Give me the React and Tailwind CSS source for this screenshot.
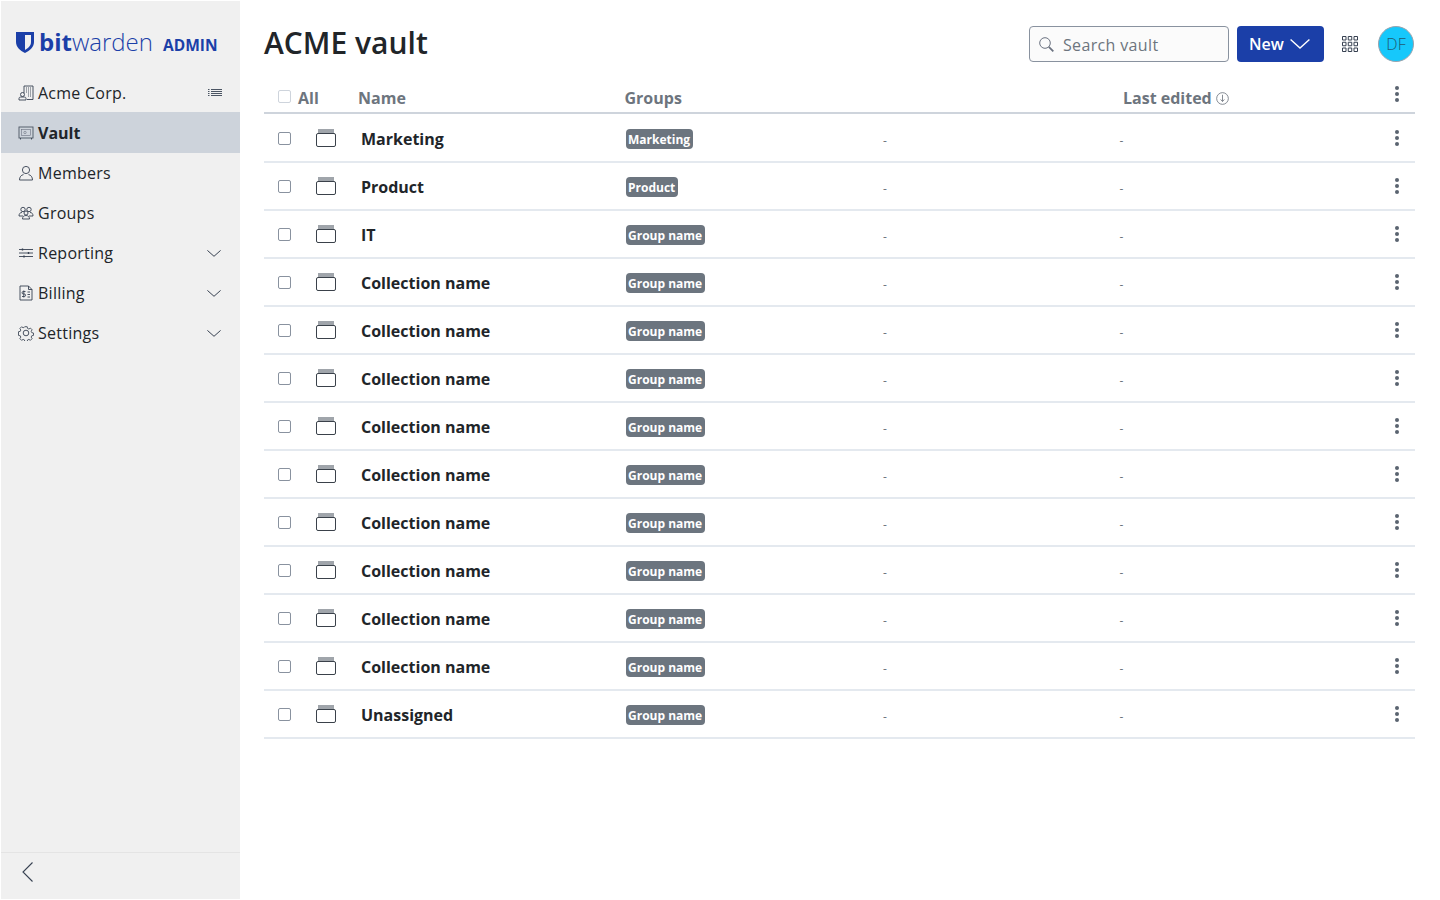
const rows = [
  ["Marketing", "Marketing"],
  ["Product", "Product"],
  ["IT", "Group name"],
  ["Collection name", "Group name"],
  ["Collection name", "Group name"],
  ["Collection name", "Group name"],
  ["Collection name", "Group name"],
  ["Collection name", "Group name"],
  ["Collection name", "Group name"],
  ["Collection name", "Group name"],
  ["Collection name", "Group name"],
  ["Collection name", "Group name"],
  ["Unassigned", "Group name"],
];

function Icon({ children }) {
  return (
    <svg viewBox="0 0 16 16" fill="none" stroke="#374151" strokeWidth="0.9" className="w-[16px] h-[16px] shrink-0">
      {children}
    </svg>
  );
}

const BuildingIcon = () => (
  <Icon>
    <path d="M6 8V1h9v13.500H9" />
    <path d="M8 3h1M10 3h1M12 3h1M8 5h1M10 5h1M12 5h1M8 7h1M10 7h1M12 7h1M10 9h1M12 9h1M10 11h1M12 11h1" />
    <circle cx="4.500" cy="9.500" r="2" />
    <path d="M1 15v-1.500c0-1 .8-1.500 1.800-1.500h3.400c1 0 1.800.5 1.800 1.500V15z" />
  </Icon>
);

const VaultIcon = () => (
  <Icon>
    <rect x="1" y="2" width="14" height="11" stroke="#4b5563" />
    <rect x="3.500" y="4.500" width="9" height="6" stroke="#6b7280" strokeWidth="0.6" />
    <circle cx="7" cy="7.500" r="1.200" stroke="#6b7280" strokeWidth="0.6" />
    <path d="M2.500 13v1.500M13.500 13v1.500" />
  </Icon>
);

const MembersIcon = () => (
  <Icon>
    <circle cx="8" cy="5" r="3.600" />
    <path d="M1.500 15c0-3 1.600-5 4-5.400M14.500 15c0-3-1.600-5-4-5.400M1.500 15h13" />
  </Icon>
);

const GroupsIcon = () => (
  <Icon>
    <circle cx="5" cy="4.500" r="2.200" />
    <circle cx="11" cy="4.500" r="2.200" />
    <circle cx="8" cy="8" r="2" />
    <path d="M1 11c0-2.200 1-3.500 3-3.500M15 11c0-2.200-1-3.500-3-3.500M1 11h4M15 11h-4M4.500 14c0-2.200 1.300-3.500 3.500-3.500s3.500 1.300 3.500 3.500z" />
  </Icon>
);

const ReportingIcon = () => (
  <Icon>
    <path d="M1 4.500h14M1 8h14M1 11.500h14" />
    <path d="M4.500 3.500v2M10.500 7v2M6 10.500v2" strokeWidth="1.400" />
  </Icon>
);

const BillingIcon = () => (
  <Icon>
    <path d="M2 1h8.500L14 4.500V15H2z" />
    <path d="M10.500 1v3.500H14M7.500 6.500H5.300a1.100 1.100 0 0 0 0 2.500h1a1.200 1.200 0 0 1 0 2.500H4M5.800 5.500v7M9.500 7h2.500M9.500 9.500h2.500M9.500 12h2.500" />
  </Icon>
);

const SettingsIcon = () => (
  <Icon>
    <path d="M6.700 1.200h2.600l.4 1.900 1.400.6 1.700-1 1.800 1.800-1 1.700.6 1.400 1.900.4v2.600l-1.900.4-.6 1.400 1 1.700-1.800 1.800-1.700-1-1.400.6-.4 1.900H6.700l-.4-1.900-1.400-.6-1.700 1-1.800-1.800 1-1.700-.6-1.400-1.900-.4V6.600l1.900-.4.6-1.400-1-1.700 1.800-1.800 1.700 1 1.400-.6z" transform="translate(.6 .6) scale(.925)" />
    <circle cx="8" cy="8" r="2.800" />
  </Icon>
);

function Chevron({ className, color = "#374151" }) {
  return (
    <svg viewBox="0 0 14 7" fill="none" stroke={color} strokeWidth="1" className={className}>
      <path d="M.4.4 7 6.300 13.600.4" />
    </svg>
  );
}

function NavItem({ icon, label, bold, chevron, list }) {
  return (
    <div className={`flex items-center pl-[17px] pr-[18px] ${bold ? "h-[41px] -mt-px bg-[#cdd3db] font-bold" : "h-[40px] font-medium tracking-[0.25px]"}`}>
      {icon}
      <span className="ml-[4px] text-[16px] text-[#212529]">{label}</span>
      {chevron && <Chevron className="ml-auto mr-px w-[14px] h-[7px]" />}
      {list && (
        <svg viewBox="0 0 14 8" className="ml-auto w-[14px] h-[8px]" stroke="#4b5563" strokeWidth="1">
          <path d="M3 .5h11M3 2.500h11M3 4.500h11M3 6.500h11M0 .5h1.500M0 2.500h1.500M0 4.500h1.500M0 6.500h1.500" />
        </svg>
      )}
    </div>
  );
}

function Dots() {
  return (
    <svg viewBox="0 0 4 16" className="w-[4px] h-[16px]" fill="#5a6470">
      <circle cx="2" cy="2" r="2" />
      <circle cx="2" cy="8" r="2" />
      <circle cx="2" cy="14" r="2" />
    </svg>
  );
}

function CollectionIcon() {
  return (
    <svg viewBox="0 0 20 18" className="w-[20px] h-[18px]" fill="none">
      <rect x="2" y="0" width="16" height="4" fill="#a0a5ab" />
      <rect x="0.500" y="4.500" width="19" height="13" rx="1.500" fill="#fff" stroke="#3a414a" />
    </svg>
  );
}

function Row({ name, group, first }) {
  return (
    <div className={`flex items-center border-b-2 border-[#e4e9ef] ${first ? "h-[49px] pt-px" : "h-[48px]"}`}>
      <div className="w-[13px] h-[13px] ml-[14px] bg-white border border-[#89929f] rounded-[2px] shrink-0" />
      <div className="ml-[25px] w-[20px] shrink-0 flex">
        <CollectionIcon />
      </div>
      <div className="ml-[25px] w-[265px] shrink-0 mt-[2px] text-[16px] font-bold text-[#212529]">{name}</div>
      <div className="w-[257px] shrink-0 flex mt-[2px]">
        <span className="h-[20px] leading-[22px] pl-[2px] pr-[3px] rounded-[4px] bg-[#6c757f] text-white text-[12px] font-bold">
          {group}
        </span>
      </div>
      <div className="w-[236.500px] shrink-0 text-[12px] text-[#6d757e] mt-[6px]">-</div>
      <div className="text-[12px] text-[#6d757e] mt-[6px]">-</div>
      <div className="ml-auto mr-[16px] flex">
        <Dots />
      </div>
    </div>
  );
}

export default function App() {
  return (
    <div className="h-[900px] flex bg-white overflow-hidden font-['Open_Sans',sans-serif]">
      <aside className="w-[239px] ml-px mt-px mb-px bg-[#f0f0f0] flex flex-col shrink-0">
        <div className="h-[72px] pl-[15px] pt-[21px] flex items-start text-[#1b3fa8]">
          <svg viewBox="0 0 18 21" className="w-[18px] h-[21px] mt-[10px] shrink-0" fill="#1b3fa8">
            <path d="M0 0h18v10c0 5-4 8.500-9 11-5-2.500-9-6-9-11zM9 3v15c3-1.700 6-4 6-8V3z" />
          </svg>
          <span className="ml-[5px] text-[24px] leading-[40px] whitespace-nowrap">
            <span className="font-bold">bit</span>
            <span className="font-light">warden</span>
          </span>
          <span className="ml-[10px] mt-[12px] text-[15.500px] leading-[22px] font-bold">ADMIN</span>
        </div>
        <nav>
          <NavItem icon={<BuildingIcon />} label="Acme Corp." list />
          <NavItem icon={<VaultIcon />} label="Vault" bold />
          <NavItem icon={<MembersIcon />} label="Members" />
          <NavItem icon={<GroupsIcon />} label="Groups" />
          <NavItem icon={<ReportingIcon />} label="Reporting" chevron />
          <NavItem icon={<BillingIcon />} label="Billing" chevron />
          <NavItem icon={<SettingsIcon />} label="Settings" chevron />
        </nav>
        <div className="mt-auto h-[47px] border-t border-[#e4e4e4] flex items-start pt-[9px] pl-[21px]">
          <svg viewBox="0 0 11 20" fill="none" stroke="#374151" strokeWidth="1.100" className="w-[11px] h-[20px]">
            <path d="M10.500.5 1 10l9.500 9.500" />
          </svg>
        </div>
      </aside>

      <main className="flex-1 pl-[24px] pr-[25px]">
        <header className="h-[84px] flex items-start">
          <h1 className="mt-[22px] text-[30px] leading-[42px] font-semibold text-[#212529]">ACME vault</h1>
          <div className="ml-auto mt-[26px] flex items-center">
            <div className="w-[200px] h-[36px] bg-[#fbfbfb] border border-[#89929f] rounded-[4px] flex items-center pl-[9px]">
              <svg viewBox="0 0 15 15" fill="none" stroke="#6b7280" strokeWidth="1" className="w-[15px] h-[15px] shrink-0">
                <circle cx="6" cy="6" r="5.300" />
                <path d="m9.800 9.800 4.500 4.500" strokeWidth="1.800" />
              </svg>
              <span className="ml-[9px] mt-px text-[16px] tracking-[0.35px] text-[#6d757e]">Search vault</span>
            </div>
            <button className="ml-[8px] w-[87px] h-[36px] bg-[#1b3fa8] rounded-[4px] flex items-center pl-[12px] text-white text-[16px] font-semibold">
              New
              <Chevron className="ml-[6px] w-[20px] h-[10px]" color="#ffffff" />
            </button>
            <svg viewBox="0 0 16 16" className="ml-[18px] w-[16px] h-[16px]" fill="none" stroke="#374151">
              <path d="M.5.5h3.500v3.500H.5zM6.250.5h3.500v3.500h-3.500zM12 .5h3.500v3.500H12zM.5 6.250h3.500v3.500H.5zM6.250 6.250h3.500v3.500h-3.500zM12 6.250h3.500v3.500H12zM.5 12h3.500v3.500H.5zM6.250 12h3.500v3.500h-3.500zM12 12h3.500v3.500H12z" />
            </svg>
            <div className="ml-[20px] mr-px w-[36px] h-[36px] rounded-full bg-[#16c8fb] border border-[#9aa3ad] flex items-center justify-center text-[16px] font-light text-[#1f5a70]">
              DF
            </div>
          </div>
        </header>

        <div className="h-[30px] flex items-center border-b-2 border-[#ced4dc] text-[16px] font-bold text-[#6d757e]">
          <div className="w-[13px] h-[13px] ml-[14px] bg-white border border-[#ced4dc] rounded-[2px] shrink-0 -mt-[3px]" />
          <span className="ml-[7px] w-[60px] shrink-0">All</span>
          <span className="w-[266.500px] shrink-0">Name</span>
          <span className="w-[498.500px] shrink-0">Groups</span>
          <span>Last edited</span>
          <svg viewBox="0 0 14 14" className="ml-[4px] w-[13px] h-[13px]" fill="none" stroke="#6d757e" strokeWidth="0.9">
            <circle cx="7" cy="7" r="6.300" />
            <path d="M7 3v7M5 8l2 2.300L9 8" />
          </svg>
          <div className="ml-auto mr-[16px] flex -mt-[8px]">
            <Dots />
          </div>
        </div>

        {rows.map(([name, group], i) => (
          <Row key={i} name={name} group={group} first={i === 0} />
        ))}
      </main>
    </div>
  );
}
